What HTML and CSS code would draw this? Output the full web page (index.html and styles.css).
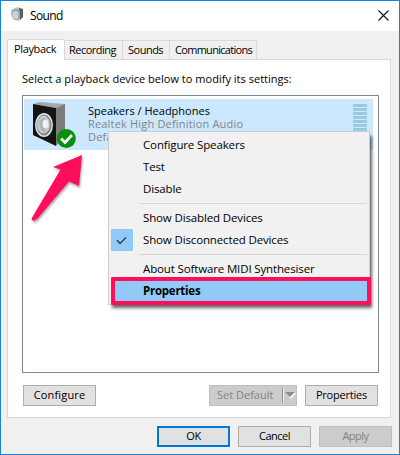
FILE: index.html
```html
<!DOCTYPE html>
<html lang="en">
<head>
<meta charset="utf-8">
<title>Sound</title>
<link rel="stylesheet" href="styles.css">
</head>
<body>
<main class="window">
  <header class="titlebar">
    <svg class="app-icon" width="14" height="16" viewBox="0 0 14 16"><path d="M2 2 8 0l5 2v8l-4 4-4-1-4-5V4z" fill="#c4c7c9"/><path d="m9 1 4 1v8l-3 3z" fill="#5b5d5e"/><ellipse cx="6" cy="7.500" rx="4.300" ry="5.500" fill="#929fa5"/><ellipse cx="5.500" cy="8" rx="3.200" ry="4.200" fill="#c4d3da"/></svg>
    <h1>Sound</h1>
    <svg class="close" width="11" height="11" viewBox="0 0 11 11"><path d="m.5.5 10 10m0-10-10 10" stroke="#111" stroke-width="1.100"/></svg>
  </header>
  <nav class="tabs">
    <span class="tab active">Playback</span>
    <span class="tab rec">Recording</span>
    <span class="tab snd">Sounds</span>
    <span class="tab com">Communications</span>
  </nav>
  <section class="panel">
    <p class="hint">Select a playback device below to modify its settings:</p>
    <div class="list">
      <div class="device">
        <svg class="speaker" width="54" height="51" viewBox="0 0 54 51">
          <path d="m9 5 6-2 26 2-9 4z" fill="#a8a8a8"/><path d="m32 9 9-4v33l-9 9z" fill="#7c7c7c"/><path d="m9 5 23 4v38L9 36z" fill="#141414"/>
          <ellipse cx="20" cy="26" rx="9" ry="12" fill="#e4e4e4"/><ellipse cx="20" cy="26" rx="7.600" ry="10.400" fill="#7f878b"/><ellipse cx="19.500" cy="25.500" rx="6.400" ry="9" fill="#c6ced2"/><path d="M15 22q6-7 10 2l-4 9q-6-1-6-11" fill="#aab5ba"/><ellipse cx="21.500" cy="25" rx="3" ry="4.500" fill="#eef2f3"/>
          <circle cx="42.300" cy="39.500" r="9.500" fill="#0a8f0a"/><path d="m37 39.500 4 4 7-7.500" fill="none" stroke="#fff" stroke-width="2.800"/>
        </svg>
        <div class="info">
          <div class="name">Speakers / Headphones</div>
          <div class="driver">Realtek High Definition Audio</div>
          <div class="state">Defa</div>
        </div>
        <div class="meter"><i></i><i></i><i></i><i></i><i></i><i></i><i></i></div>
      </div>
    </div>
    <div class="actions">
      <button class="btn configure">Configure</button>
      <button class="btn split disabled"><span>Set Default</span><svg width="14" height="16" viewBox="0 0 14 16"><path d="M.5 1v15" stroke="#8f8f8f"/><path d="M1.500 1v15" stroke="#eee"/><path d="m8 11 5-5" stroke="#fff" stroke-width="2"/><path d="M3 5h10l-5 5z" fill="#8b8b8b"/></svg></button>
      <button class="btn props">Properties</button>
    </div>
  </section>
  <footer>
    <button class="btn ok">OK</button>
    <button class="btn cancel">Cancel</button>
    <button class="btn apply disabled">Apply</button>
  </footer>
  <svg class="arrow" width="62" height="82" viewBox="0 0 62 82"><path d="m58 10-3 31-10-4.500L14 73q-4 4-6 2-1-1 1-4L36.500 24.500 29 22z" fill="#ff0f5b"/></svg>
  <div class="menu">
    <div class="item">Configure Speakers</div>
    <div class="item">Test</div>
    <div class="item">Disable</div>
    <hr>
    <div class="item">Show Disabled Devices</div>
    <div class="item"><span class="check"><svg width="12" height="9" viewBox="0 0 12 9"><path d="m1 4 3 3.500 6-6" fill="none" stroke="#2c3d4e" stroke-width="1.400"/></svg></span>Show Disconnected Devices</div>
    <hr>
    <div class="item">About Software MIDI Synthesiser</div>
    <div class="item selected">Properties</div>
    <div class="highlight"></div>
  </div>
</main>
</body>
</html>
```
FILE: styles.css
```css
* { box-sizing: border-box; }
body { margin: 0; font: 11px/16px "Open Sans", "Noto Sans", sans-serif; color: #000; }
.window { position: relative; width: 400px; height: 455px; border: 1px solid #1883d7; background: #f0f0f0; overflow: hidden; white-space: nowrap; }
.titlebar { height: 30px; display: flex; align-items: center; background: #fff; padding: 0 10px 2px 9px; }
h1 { margin: 2px 0 0 6px; font-size: 12px; font-weight: 400; flex: 1; letter-spacing: -.6px; }
.tabs { display: flex; align-items: flex-end; height: 28px; margin-left: 6px; }
.tab { height: 19px; border: 1px solid #d9d9d9; border-left: 0; border-bottom: 0; padding-left: 4px; line-height: 18px; letter-spacing: -.5px; }
.tab.active { height: 21px; width: 58px; background: #fff; border-left: 1px solid #d9d9d9; padding-left: 6px; line-height: 18px; margin-bottom: -1px; position: relative; letter-spacing: -.35px; }
.rec { width: 58px; }
.snd { width: 47px; padding-left: 5px; }
.com { width: 87px; padding-left: 5px; letter-spacing: -.7px; }
.panel { width: 384px; height: 359px; margin-left: 6px; border: 1px solid #d9d9d9; background: #fff; padding: 11px 11px 0 14px; }
.hint { margin: 0 0 8px; height: 16px; letter-spacing: .02px; }
.list { width: 357px; height: 278px; border: 1px solid #828790; padding: 3px 1px; }
.device { display: flex; width: 349px; height: 51px; background: #cce8ff; }
.info { margin: 5px 0 0 10px; line-height: 13px; flex: 1; }
.driver, .state { color: #838383; letter-spacing: .18px; }
.meter { margin: 5px 6px 0 0; width: 14px; display: flex; flex-direction: column; gap: 1px; }
.meter i { height: 3px; background: #9acbe2; }
.actions { display: flex; margin: 12px 0 0 1px; }
.btn { font: inherit; height: 21px; width: 73px; padding: 0 0 1px; background: #e1e1e1; border: 1px solid #adadad; display: flex; align-items: center; justify-content: center; color: #000; }
.disabled { background: #ccc; border-color: #bfbfbf; color: #838383; }
.configure { letter-spacing: .15px; }
.split { width: 88px; margin-left: 113px; justify-content: flex-start; padding-left: 7px; }
.split svg { margin-left: auto; }
.props { margin-left: 8px; letter-spacing: -.2px; }
footer { display: flex; margin: 8px 0 0 156px; gap: 8px; }
footer .btn { letter-spacing: -.5px; }
footer .ok { border: 2px solid #0078d7; }
.arrow { position: absolute; left: 23px; top: 144px; filter: drop-shadow(1px 2px 1px #0005); }
.menu { position: absolute; left: 107px; top: 130px; width: 262px; height: 174px; border: 1px solid #ccc; background: #f1f1f1; padding: 2px; box-shadow: 3px 4px 3px -1px #0009; font-size: 11.5px; letter-spacing: -.14px; }
.item { display: flex; height: 22px; line-height: 22px; padding-left: 32px; position: relative; }
.menu hr { height: 1px; border: 0; margin: 3px 0 3px 28px; background: #d6d6d6; }
.check { position: absolute; left: 0; top: 0; width: 22px; height: 22px; background: #91c9f7; display: flex; align-items: center; justify-content: center; }
.selected { background: #91c9f7; font-weight: 700; letter-spacing: -.25px; }
.highlight { position: absolute; left: 2px; top: 145px; width: 260px; height: 28px; border: 4px solid #ff0f5b; border-radius: 1px; }
```
